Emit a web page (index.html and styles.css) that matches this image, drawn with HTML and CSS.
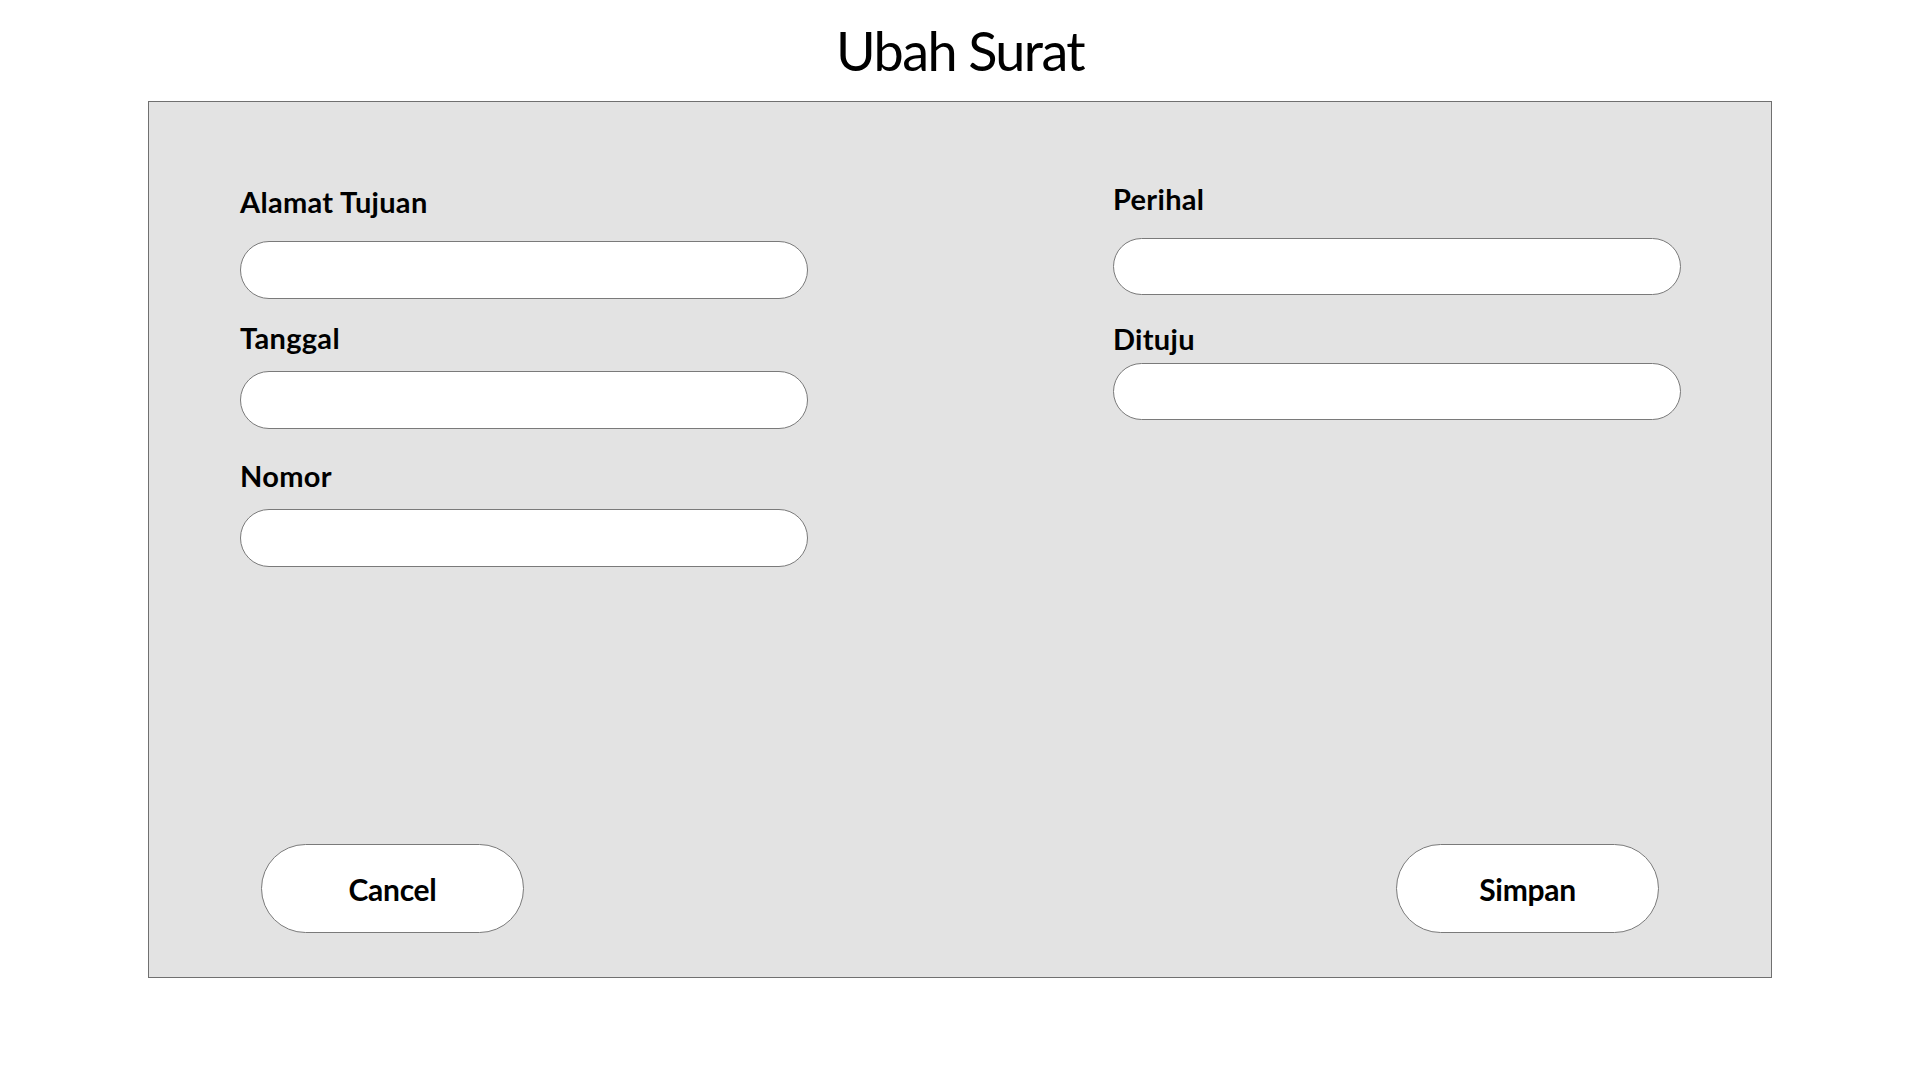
FILE: index.html
```html
<!DOCTYPE html>
<html lang="id">
<head>
<meta charset="utf-8">
<title>Ubah Surat</title>
<link rel="stylesheet" href="styles.css">
</head>
<body>
<h1 class="title">Ubah Surat</h1>
<div class="panel">
  <div class="form-grid">
    <div class="col col-left">
      <label class="label">Alamat Tujuan</label>
      <input class="input input-alamat" type="text">
      <label class="label label-tanggal">Tanggal</label>
      <input class="input input-tanggal" type="text">
      <label class="label label-nomor">Nomor</label>
      <input class="input input-nomor" type="text">
    </div>
    <div class="col col-right">
      <label class="label">Perihal</label>
      <input class="input input-perihal" type="text">
      <label class="label label-dituju">Dituju</label>
      <input class="input input-dituju" type="text">
    </div>
  </div>
  <div class="actions">
    <button class="btn" type="button">Cancel</button>
    <button class="btn" type="button">Simpan</button>
  </div>
</div>
</body>
</html>
```

FILE: styles.css
```css
html, body {
  margin: 0;
  padding: 0;
  background: #ffffff;
  font-family: Lato, "Open Sans", "Liberation Sans", sans-serif;
  color: #000;
}

.title {
  margin: 19px 0 0;
  height: 64px;
  line-height: 64px;
  font-size: 54px;
  font-weight: 400;
  letter-spacing: -1.6px;
  text-align: center;
}

.panel {
  box-sizing: border-box;
  width: 1624px;
  height: 877px;
  margin: 18px auto 0;
  background: #e3e3e3;
  border: 1px solid #707070;
  display: flex;
  flex-direction: column;
}

.form-grid {
  display: grid;
  grid-template-columns: 568px 568px;
  column-gap: 305px;
  padding-left: 91px;
}

.col {
  display: flex;
  flex-direction: column;
}

.col-left { margin-top: 84px; }
.col-right { margin-top: 81px; }

.label {
  font-size: 29px;
  line-height: 32px;
  height: 32px;
  font-weight: 700;
  letter-spacing: 0.3px;
  white-space: nowrap;
}

.input {
  box-sizing: border-box;
  width: 568px;
  height: 58px;
  margin: 23px 0 0;
  border: 1px solid #7a7a7a;
  border-radius: 29px;
  background: #fff;
  outline: none;
  padding: 0 24px;
  font: inherit;
}

.label-tanggal { margin-top: 23px; }
.input-tanggal { margin-top: 17px; }
.label-nomor { margin-top: 31px; }
.input-nomor { margin-top: 17px; }

.input-perihal { margin-top: 23px; height: 57px; }
.label-dituju { margin-top: 28px; }
.input-dituju { margin-top: 8px; height: 57px; }

.actions {
  margin-top: auto;
  display: flex;
  justify-content: space-between;
  padding: 0 112px 44px;
}

.btn {
  box-sizing: border-box;
  width: 263px;
  height: 89px;
  border: 1px solid #7a7a7a;
  border-radius: 45px;
  background: #fff;
  font-family: Lato, "Open Sans", "Liberation Sans", sans-serif;
  font-size: 30px;
  font-weight: 700;
  letter-spacing: -0.3px;
  color: #000;
  padding: 0;
  cursor: pointer;
}
```
